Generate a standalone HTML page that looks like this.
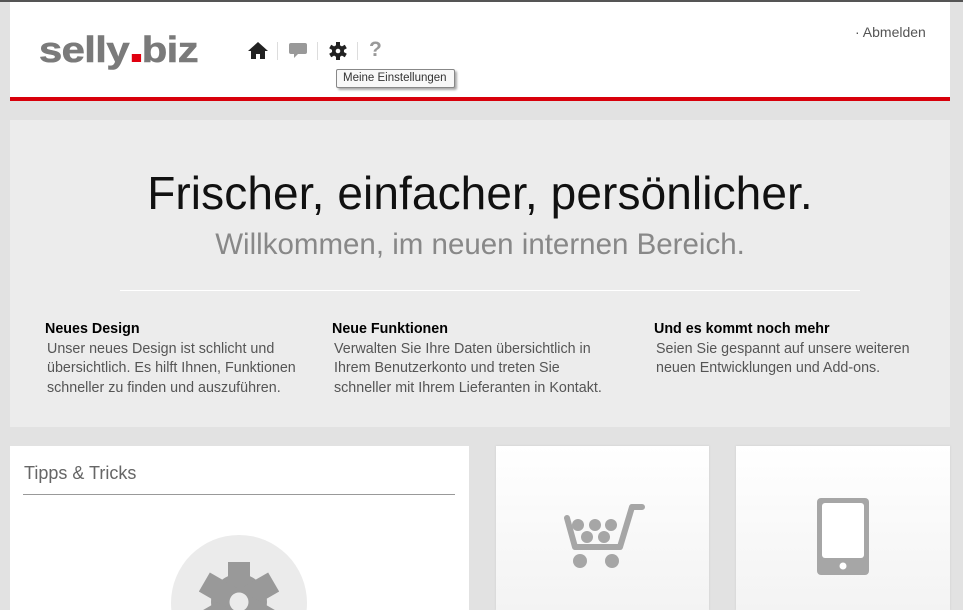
<!DOCTYPE html>
<html><head><meta charset="utf-8"><style>
*{margin:0;padding:0;box-sizing:border-box}
html,body{width:963px;height:610px;overflow:hidden}
body{background:#e2e2e2;font-family:"Liberation Sans","DejaVu Sans",sans-serif;position:relative}
.abs{position:absolute}
#top{left:0;top:0;width:963px;height:2px;background:#555}
#hdr{left:10px;top:2px;width:940px;height:96px;background:#fff}
#red{left:10px;top:97px;width:940px;height:4px;background:#d8000b}
#logo{left:39px;top:29px;font-size:36px;font-weight:bold;color:#7a7a7a;letter-spacing:-0.5px;transform:scaleX(1.16);transform-origin:0 0;-webkit-text-stroke:0.6px #7a7a7a}
#logo span{display:inline-block;width:8px;height:8px;background:#e0000f;margin:0 1px 0 2px}
.sep{top:42px;width:1px;height:18px;background:#ddd}
#tip{left:336px;top:69px;width:119px;height:19px;border:1px solid #888;border-radius:2px;background:#f8f8f8;font-size:11.5px;color:#333;padding:2px 0 0 6px;box-shadow:2px 2px 2px #aaa}
#ab{left:855px;top:24px;font-size:14px;color:#555}
#hero{left:10px;top:120px;width:940px;height:307px;background:#ececec}
h1{position:absolute;left:0;width:940px;top:46px;text-align:center;font-weight:normal;font-size:46px;color:#111;letter-spacing:0.1px}
h2{position:absolute;left:0;width:940px;top:108px;text-align:center;font-weight:normal;font-size:29.5px;color:#888;letter-spacing:0}
#div{left:110px;top:170px;width:740px;height:1px;background:#fff}
.f{top:200px;font-size:14.3px;color:#555;line-height:19.5px}
.f b{display:block;color:#000;margin-left:-2px}
.card{top:446px;height:164px;background:linear-gradient(#fff,#f3f3f3);box-shadow:0 0 2px #ccc}
#clip{left:10px;top:446px;width:459px;height:164px;background:#fff;overflow:hidden}
</style></head><body>
<div id="top" class="abs"></div>
<div id="hdr" class="abs"></div>
<div id="red" class="abs"></div>
<div id="logo" class="abs">selly<span></span>biz</div>
<svg class="abs" style="left:248px;top:42px" width="20" height="17" viewBox="0 0 20 17"><path d="M10 0L0 9h3v8h5v-5h4v5h5V9h3z" fill="#222"/></svg>
<div class="abs sep" style="left:277px"></div>
<svg class="abs" style="left:289px;top:43px" width="18" height="16" viewBox="0 0 18 16"><path d="M2 0h14a2 2 0 0 1 2 2v7a2 2 0 0 1-2 2H9l-4 4v-4H2a2 2 0 0 1-2-2V2a2 2 0 0 1 2-2z" fill="#999"/></svg>
<div class="abs sep" style="left:317px"></div>
<svg class="abs" style="left:329px;top:42px" width="18" height="18" viewBox="-9 -9 18 18"><g fill="#222"><circle r="6"/><rect x="-2" y="-9" width="4" height="18"/><rect x="-2" y="-9" width="4" height="18" transform="rotate(60)"/><rect x="-2" y="-9" width="4" height="18" transform="rotate(120)"/></g><circle r="2.3" fill="#fff"/></svg>
<div class="abs sep" style="left:357px"></div>
<div class="abs" style="left:369px;top:38px;font-size:21px;font-weight:bold;color:#999">?</div>
<div id="tip" class="abs">Meine Einstellungen</div>
<div id="ab" class="abs">· Abmelden</div>
<div id="hero" class="abs">
<h1>Frischer, einfacher, persönlicher.</h1>
<h2>Willkommen, im neuen internen Bereich.</h2>
<div id="div" class="abs"></div>
<div class="abs f" style="left:37px"><b>Neues Design</b>Unser neues Design ist schlicht und<br>übersichtlich. Es hilft Ihnen, Funktionen<br>schneller zu finden und auszuführen.</div>
<div class="abs f" style="left:324px"><b>Neue Funktionen</b>Verwalten Sie Ihre Daten übersichtlich in<br>Ihrem Benutzerkonto und treten Sie<br>schneller mit Ihrem Lieferanten in Kontakt.</div>
<div class="abs f" style="left:646px"><b>Und es kommt noch mehr</b>Seien Sie gespannt auf unsere weiteren<br>neuen Entwicklungen und Add-ons.</div>
</div>
<div id="clip" class="abs">
<div class="abs" style="left:14px;top:17px;font-size:18px;color:#666">Tipps &amp; Tricks</div>
<div class="abs" style="left:13px;top:48px;width:432px;height:1px;background:#999"></div>
<div class="abs" style="left:161px;top:89px;width:136px;height:136px;border-radius:50%;background:#ebebeb"></div>
<svg class="abs" style="left:189px;top:116px" width="80" height="80" viewBox="-40 -40 80 80"><g fill="#999"><circle r="28"/><rect x="-11" y="-40" width="22" height="80"/><rect x="-11" y="-40" width="22" height="80" transform="rotate(60)"/><rect x="-11" y="-40" width="22" height="80" transform="rotate(120)"/></g><circle r="9.5" fill="#ebebeb"/></svg>
</div>
<div class="abs card" style="left:496px;width:213px"></div>
<div class="abs card" style="left:736px;width:214px"></div>
<svg class="abs" style="left:560px;top:500px" width="90" height="75" viewBox="560 500 90 75"><g fill="#a6a6a6"><path d="M567 518L575 547H620L632 507H642" fill="none" stroke="#a6a6a6" stroke-width="6" stroke-linecap="round" stroke-linejoin="round"/><circle cx="578" cy="525" r="6"/><circle cx="595" cy="525" r="6"/><circle cx="611" cy="525" r="6"/><circle cx="587" cy="537" r="6"/><circle cx="604" cy="537" r="6"/><circle cx="580" cy="561" r="7"/><circle cx="612" cy="561" r="7"/></g></svg>
<svg class="abs" style="left:817px;top:498px" width="52" height="77" viewBox="0 0 52 77"><rect width="52" height="77" rx="4" fill="#a6a6a6"/><rect x="5" y="5" width="42" height="55" rx="3" fill="#fff"/><circle cx="26" cy="68" r="3.5" fill="#fff"/></svg>
</body></html>
